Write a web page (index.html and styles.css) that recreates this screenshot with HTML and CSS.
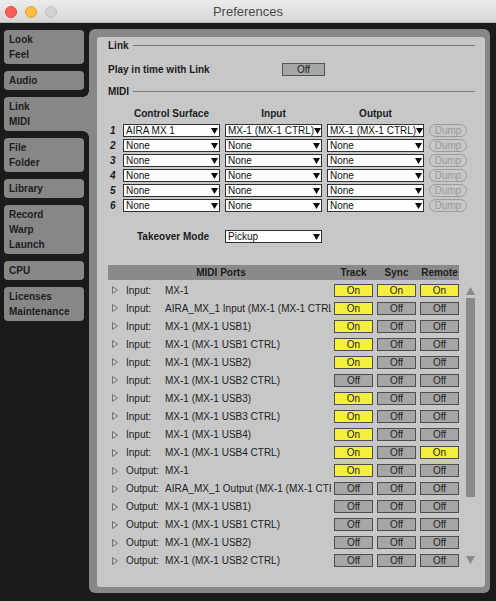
FILE: index.html
```html
<!DOCTYPE html>
<html>
<head>
<meta charset="utf-8">
<title>Preferences</title>
<link rel="stylesheet" href="styles.css">
</head>
<body>
<div class="window">
  <div class="titlebar">
    <div class="lights"><span class="light red"></span><span class="light yellow"></span><span class="light grey"></span></div>
    <div class="title">Preferences</div>
    <div></div>
  </div>
  <div class="main">
    <nav class="sidebar">
      <div class="tab"><div>Look</div><div>Feel</div></div>
      <div class="tab">Audio</div>
      <div class="tab sel"><div>Link</div><div>MIDI</div></div>
      <div class="tab"><div>File</div><div>Folder</div></div>
      <div class="tab">Library</div>
      <div class="tab"><div>Record</div><div>Warp</div><div>Launch</div></div>
      <div class="tab">CPU</div>
      <div class="tab"><div>Licenses</div><div>Maintenance</div></div>
    </nav>
    <div class="panel">
      <div class="inner">
        <div class="section"><span class="sec-label">Link</span><span class="sec-line"></span></div>
        <div class="play-row"><span class="play-label">Play in time with Link</span><span class="toggle">Off</span></div>
        <div class="section midi-sec"><span class="sec-label">MIDI</span><span class="sec-line"></span></div>

        <div class="cols-head">
          <span class="num"></span>
          <span class="col">Control Surface</span>
          <span class="col">Input</span>
          <span class="col">Output</span>
        </div>
        <div class="cs-rows">
          <div class="cs-row"><span class="num">1</span><span class="sel-box">AIRA MX 1<svg class="arr" viewBox="0 0 7 6"><polygon points="0,0 7,0 3.5,6"/></svg></span><span class="sel-box">MX-1 (MX-1 CTRL)<svg class="arr" viewBox="0 0 7 6"><polygon points="0,0 7,0 3.5,6"/></svg></span><span class="sel-box">MX-1 (MX-1 CTRL)<svg class="arr" viewBox="0 0 7 6"><polygon points="0,0 7,0 3.5,6"/></svg></span><span class="dump">Dump</span></div>
          <div class="cs-row"><span class="num">2</span><span class="sel-box">None<svg class="arr" viewBox="0 0 7 6"><polygon points="0,0 7,0 3.5,6"/></svg></span><span class="sel-box">None<svg class="arr" viewBox="0 0 7 6"><polygon points="0,0 7,0 3.5,6"/></svg></span><span class="sel-box">None<svg class="arr" viewBox="0 0 7 6"><polygon points="0,0 7,0 3.5,6"/></svg></span><span class="dump">Dump</span></div>
          <div class="cs-row"><span class="num">3</span><span class="sel-box">None<svg class="arr" viewBox="0 0 7 6"><polygon points="0,0 7,0 3.5,6"/></svg></span><span class="sel-box">None<svg class="arr" viewBox="0 0 7 6"><polygon points="0,0 7,0 3.5,6"/></svg></span><span class="sel-box">None<svg class="arr" viewBox="0 0 7 6"><polygon points="0,0 7,0 3.5,6"/></svg></span><span class="dump">Dump</span></div>
          <div class="cs-row"><span class="num">4</span><span class="sel-box">None<svg class="arr" viewBox="0 0 7 6"><polygon points="0,0 7,0 3.5,6"/></svg></span><span class="sel-box">None<svg class="arr" viewBox="0 0 7 6"><polygon points="0,0 7,0 3.5,6"/></svg></span><span class="sel-box">None<svg class="arr" viewBox="0 0 7 6"><polygon points="0,0 7,0 3.5,6"/></svg></span><span class="dump">Dump</span></div>
          <div class="cs-row"><span class="num">5</span><span class="sel-box">None<svg class="arr" viewBox="0 0 7 6"><polygon points="0,0 7,0 3.5,6"/></svg></span><span class="sel-box">None<svg class="arr" viewBox="0 0 7 6"><polygon points="0,0 7,0 3.5,6"/></svg></span><span class="sel-box">None<svg class="arr" viewBox="0 0 7 6"><polygon points="0,0 7,0 3.5,6"/></svg></span><span class="dump">Dump</span></div>
          <div class="cs-row"><span class="num">6</span><span class="sel-box">None<svg class="arr" viewBox="0 0 7 6"><polygon points="0,0 7,0 3.5,6"/></svg></span><span class="sel-box">None<svg class="arr" viewBox="0 0 7 6"><polygon points="0,0 7,0 3.5,6"/></svg></span><span class="sel-box">None<svg class="arr" viewBox="0 0 7 6"><polygon points="0,0 7,0 3.5,6"/></svg></span><span class="dump">Dump</span></div>
        </div>

        <div class="takeover"><span class="to-label">Takeover Mode</span><span class="sel-box">Pickup<svg class="arr" viewBox="0 0 7 6"><polygon points="0,0 7,0 3.5,6"/></svg></span></div>

        <div class="ports">
          <div class="ports-table">
            <div class="ports-head"><span class="ph-name">MIDI Ports</span><span class="ph-col">Track</span><span class="ph-col">Sync</span><span class="ph-col">Remote</span></div>
            <div class="ports-rows">
              <div class="prow"><svg class="tri" viewBox="0 0 6 8"><polygon points="0.5,0.5 5.5,4 0.5,7.5"/></svg><span class="kind">Input:</span><span class="pname">MX-1</span><span class="btn on">On</span><span class="btn on">On</span><span class="btn on">On</span></div>
              <div class="prow"><svg class="tri" viewBox="0 0 6 8"><polygon points="0.5,0.5 5.5,4 0.5,7.5"/></svg><span class="kind">Input:</span><span class="pname">AIRA_MX_1 Input (MX-1 (MX-1 CTRL)</span><span class="btn on">On</span><span class="btn">Off</span><span class="btn">Off</span></div>
              <div class="prow"><svg class="tri" viewBox="0 0 6 8"><polygon points="0.5,0.5 5.5,4 0.5,7.5"/></svg><span class="kind">Input:</span><span class="pname">MX-1 (MX-1 USB1)</span><span class="btn on">On</span><span class="btn">Off</span><span class="btn">Off</span></div>
              <div class="prow"><svg class="tri" viewBox="0 0 6 8"><polygon points="0.5,0.5 5.5,4 0.5,7.5"/></svg><span class="kind">Input:</span><span class="pname">MX-1 (MX-1 USB1 CTRL)</span><span class="btn on">On</span><span class="btn">Off</span><span class="btn">Off</span></div>
              <div class="prow"><svg class="tri" viewBox="0 0 6 8"><polygon points="0.5,0.5 5.5,4 0.5,7.5"/></svg><span class="kind">Input:</span><span class="pname">MX-1 (MX-1 USB2)</span><span class="btn on">On</span><span class="btn">Off</span><span class="btn">Off</span></div>
              <div class="prow"><svg class="tri" viewBox="0 0 6 8"><polygon points="0.5,0.5 5.5,4 0.5,7.5"/></svg><span class="kind">Input:</span><span class="pname">MX-1 (MX-1 USB2 CTRL)</span><span class="btn">Off</span><span class="btn">Off</span><span class="btn">Off</span></div>
              <div class="prow"><svg class="tri" viewBox="0 0 6 8"><polygon points="0.5,0.5 5.5,4 0.5,7.5"/></svg><span class="kind">Input:</span><span class="pname">MX-1 (MX-1 USB3)</span><span class="btn on">On</span><span class="btn">Off</span><span class="btn">Off</span></div>
              <div class="prow"><svg class="tri" viewBox="0 0 6 8"><polygon points="0.5,0.5 5.5,4 0.5,7.5"/></svg><span class="kind">Input:</span><span class="pname">MX-1 (MX-1 USB3 CTRL)</span><span class="btn on">On</span><span class="btn">Off</span><span class="btn">Off</span></div>
              <div class="prow"><svg class="tri" viewBox="0 0 6 8"><polygon points="0.5,0.5 5.5,4 0.5,7.5"/></svg><span class="kind">Input:</span><span class="pname">MX-1 (MX-1 USB4)</span><span class="btn on">On</span><span class="btn">Off</span><span class="btn">Off</span></div>
              <div class="prow"><svg class="tri" viewBox="0 0 6 8"><polygon points="0.5,0.5 5.5,4 0.5,7.5"/></svg><span class="kind">Input:</span><span class="pname">MX-1 (MX-1 USB4 CTRL)</span><span class="btn on">On</span><span class="btn">Off</span><span class="btn on">On</span></div>
              <div class="prow"><svg class="tri" viewBox="0 0 6 8"><polygon points="0.5,0.5 5.5,4 0.5,7.5"/></svg><span class="kind">Output:</span><span class="pname">MX-1</span><span class="btn on">On</span><span class="btn">Off</span><span class="btn">Off</span></div>
              <div class="prow"><svg class="tri" viewBox="0 0 6 8"><polygon points="0.5,0.5 5.5,4 0.5,7.5"/></svg><span class="kind">Output:</span><span class="pname">AIRA_MX_1 Output (MX-1 (MX-1 CTRL)</span><span class="btn">Off</span><span class="btn">Off</span><span class="btn">Off</span></div>
              <div class="prow"><svg class="tri" viewBox="0 0 6 8"><polygon points="0.5,0.5 5.5,4 0.5,7.5"/></svg><span class="kind">Output:</span><span class="pname">MX-1 (MX-1 USB1)</span><span class="btn">Off</span><span class="btn">Off</span><span class="btn">Off</span></div>
              <div class="prow"><svg class="tri" viewBox="0 0 6 8"><polygon points="0.5,0.5 5.5,4 0.5,7.5"/></svg><span class="kind">Output:</span><span class="pname">MX-1 (MX-1 USB1 CTRL)</span><span class="btn">Off</span><span class="btn">Off</span><span class="btn">Off</span></div>
              <div class="prow"><svg class="tri" viewBox="0 0 6 8"><polygon points="0.5,0.5 5.5,4 0.5,7.5"/></svg><span class="kind">Output:</span><span class="pname">MX-1 (MX-1 USB2)</span><span class="btn">Off</span><span class="btn">Off</span><span class="btn">Off</span></div>
              <div class="prow"><svg class="tri" viewBox="0 0 6 8"><polygon points="0.5,0.5 5.5,4 0.5,7.5"/></svg><span class="kind">Output:</span><span class="pname">MX-1 (MX-1 USB2 CTRL)</span><span class="btn">Off</span><span class="btn">Off</span><span class="btn">Off</span></div>
            </div>
          </div>
          <div class="scrollbar">
            <svg class="sarrow" viewBox="0 0 9 8"><polygon points="4.5,0 9,8 0,8"/></svg>
            <div class="thumb"></div>
            <svg class="sarrow down" viewBox="0 0 9 8"><polygon points="0,0 9,0 4.5,8"/></svg>
          </div>
        </div>
      </div>
    </div>
  </div>
</div>
</body>
</html>
```

FILE: styles.css
```css
* { box-sizing: border-box; }
html, body { margin: 0; padding: 0; }
body {
  background: #1b1b1b;
  font-family: "Liberation Sans", Arial, sans-serif;
  font-size: 10px;
  color: #1c1c1c;
  width: 496px;
  height: 601px;
  overflow: hidden;
}
.window { width: 496px; height: 601px; display: flex; flex-direction: column; }

/* title bar */
.titlebar {
  height: 23px;
  flex: none;
  display: grid;
  grid-template-columns: 1fr auto 1fr;
  align-items: center;
  background: linear-gradient(#ececec, #d6d6d6);
  border-bottom: 1px solid #b2b2b2;
}
.lights { display: flex; gap: 8px; padding-left: 5px; padding-top: 1px; }
.light { width: 12px; height: 12px; border-radius: 50%; display: block; }
.light.red { background: #fc5f57; border: 1px solid #e0463f; }
.light.yellow { background: #fdbd41; border: 1px solid #dea234; }
.light.grey { background: #d1d1d1; border: 1px solid #c1c1c1; }
.title { font-size: 13px; color: #4b4b4b; padding-top: 1px; }

/* main */
.main { flex: 1; display: flex; padding: 6px 6px 8px 4px; }
.sidebar { width: 85px; flex: none; padding-top: 1px; display: flex; flex-direction: column; gap: 7px; }
.tab {
  width: 80px;
  background: #878787;
  border-radius: 4px;
  padding: 2px 5px;
  line-height: 15px;
  font-weight: bold;
  color: #1d1d1d;
}
.tab.sel {
  width: 85px;
  border-radius: 4px 0 0 4px;
  position: relative;
}
.tab.sel::before, .tab.sel::after {
  content: "";
  position: absolute;
  right: 0;
  width: 6px;
  height: 6px;
}
.tab.sel::before {
  top: -6px;
  background: radial-gradient(circle at 0 0, transparent 5.5px, #878787 6px);
}
.tab.sel::after {
  bottom: -6px;
  background: radial-gradient(circle at 0 100%, transparent 5.5px, #878787 6px);
}

.panel {
  width: 401px;
  flex: none;
  background: #878787;
  border-radius: 6px;
  padding: 8px 7px 6px 8px;
  display: flex;
}
.inner {
  flex: 1;
  background: #c7c7c7;
  border-radius: 3px;
  padding: 2px 10px 0 11px;
}

.section { display: flex; align-items: center; height: 12px; }
.sec-label { width: 25px; font-weight: bold; }
.sec-line { flex: 1; height: 1px; background: #7b7b7b; }
.midi-sec { margin-top: 9px; }

.play-row { display: flex; align-items: center; height: 13px; margin-top: 12px; }
.play-label { width: 174px; font-weight: bold; }
.toggle {
  width: 43px; height: 13px;
  background: #a6a6a6;
  border: 1px solid #545454;
  text-align: center;
  line-height: 11px;
}

.cols-head { display: flex; height: 12px; margin-top: 10px; align-items: center; font-weight: bold; }
.num { width: 15px; flex: none; font-weight: bold; font-style: italic; padding-left: 2px; }
.col { width: 97px; margin-right: 5px; text-align: center; }

.cs-rows { margin-top: 5px; display: flex; flex-direction: column; gap: 2px; }
.cs-row { display: flex; align-items: center; height: 13px; }
.sel-box {
  width: 97px; height: 13px;
  margin-right: 5px;
  background: #fdfdfd;
  border: 1px solid #303030;
  padding-left: 2px;
  line-height: 11px;
  display: flex;
  align-items: center;
  justify-content: space-between;
  white-space: nowrap;
  overflow: hidden;
  color: #111;
}
.arr { width: 7px; height: 6px; flex: none; margin-right: 1px; fill: #0c0c0c; }
.dump {
  width: 38px; height: 13px;
  border: 1px solid #9b9b9b;
  border-radius: 7px;
  color: #9b9b9b;
  text-align: center;
  line-height: 11px;
}

.takeover { display: flex; align-items: center; margin-top: 18px; height: 13px; }
.to-label { width: 117px; padding-left: 29px; font-weight: bold; }

.ports { display: flex; margin-top: 22px; gap: 7px; }
.ports-table { width: 351px; flex: none; }
.ports-head {
  display: flex; align-items: center; height: 15px;
  background: #8a8a8a;
  font-weight: bold;
}
.ph-name { width: 226px; text-align: center; }
.ph-col { width: 39px; margin-right: 4px; text-align: center; }
.ph-col:last-child { margin-right: 0; }
.ports-rows { padding-top: 1px; }
.prow { display: flex; align-items: center; height: 18.07px; }
.tri { width: 6px; height: 8px; margin-left: 4px; margin-right: 8px; fill: none; stroke: #707070; stroke-width: 1; flex: none; }
.kind { width: 39px; flex: none; color: #222; }
.pname { width: 166px; margin-right: 3px; flex: none; white-space: nowrap; overflow: hidden; color: #222; }
.btn {
  width: 39px; height: 13px; flex: none;
  margin-right: 4px;
  background: #a6a6a6;
  border: 1px solid #4e4e4e;
  text-align: center;
  line-height: 11px;
  color: #1f1f1f;
}
.btn:last-child { margin-right: 0; }
.btn.on { background: #f3ef3d; }

.scrollbar { width: 9px; flex: none; display: flex; flex-direction: column; padding-top: 22px; }
.sarrow { width: 9px; height: 8px; fill: #8a8a8a; display: block; }
.thumb { width: 9px; height: 199px; margin-top: 3px; background: #8a8a8a; }
.sarrow.down { margin-top: 59px; }
```
